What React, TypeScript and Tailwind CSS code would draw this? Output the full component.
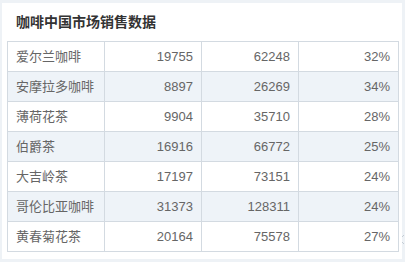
import React from "react";

const rows: [string, number, number, string][] = [
  ["爱尔兰咖啡", 19755, 62248, "32%"],
  ["安摩拉多咖啡", 8897, 26269, "34%"],
  ["薄荷花茶", 9904, 35710, "28%"],
  ["伯爵茶", 16916, 66772, "25%"],
  ["大吉岭茶", 17197, 73151, "24%"],
  ["哥伦比亚咖啡", 31373, 128311, "24%"],
  ["黄春菊花茶", 20164, 75578, "27%"],
];

export default function App() {
  return (
    <div
      className="relative w-[405px] h-[262px] bg-[#eef2f6] pt-[3px] pl-[2px] overflow-hidden"
      style={{ fontFamily: '"Liberation Sans", "Noto Sans CJK SC", sans-serif' }}
    >
      <div className="w-[400px] h-[256px] bg-white pl-[5px]">
        <div className="pt-[10px] pl-[9px] h-[38px] text-[14px] leading-[18px] font-bold text-[#333]">
          咖啡中国市场销售数据
        </div>
        <table className="border-collapse w-[391px] table-fixed text-[13px] text-[#666]">
          <colgroup>
            <col className="w-[97px]" />
            <col className="w-[97px]" />
            <col className="w-[97px]" />
            <col className="w-[100px]" />
          </colgroup>
          <tbody>
            {rows.map((r, i) => (
              <tr key={r[0]} className={i % 2 === 1 ? "bg-[#eef3f8]" : "bg-white"}>
                <td className="h-[30px] p-0 pl-[8px] border border-[#d3dae1]">{r[0]}</td>
                <td className="h-[30px] p-0 pr-[8px] text-right border border-[#d3dae1]">{r[1]}</td>
                <td className="h-[30px] p-0 pr-[8px] text-right border border-[#d3dae1]">{r[2]}</td>
                <td className="h-[30px] p-0 pr-[8px] text-right border border-[#d3dae1]">{r[3]}</td>
              </tr>
            ))}
          </tbody>
        </table>
      </div>
      {/* resize grip */}
      <svg className="absolute left-[401px] top-[234px]" width="4" height="11" viewBox="0 0 4 11">
        <path d="M3 1 L1 3 M1 8 L3 10" stroke="#c4ccd4" strokeWidth="1" fill="none" />
      </svg>
    </div>
  );
}
